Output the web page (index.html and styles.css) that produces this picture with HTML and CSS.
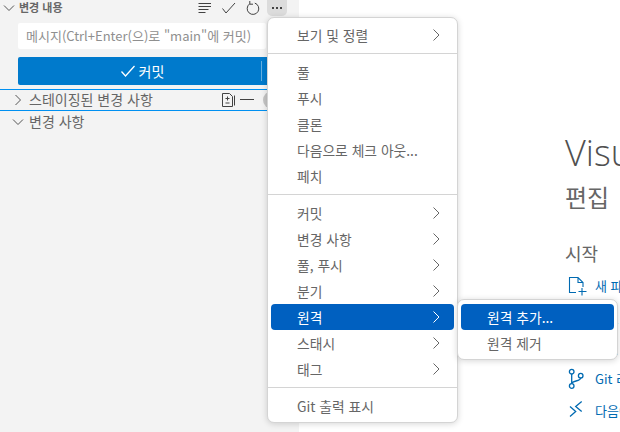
FILE: index.html
```html
<!DOCTYPE html>
<html lang="ko">
<head>
<meta charset="utf-8">
<title>변경 내용</title>
<link rel="stylesheet" href="styles.css">
</head>
<body>
<div class="app">
  <aside class="sidebar">
    <div class="view-head">
      <svg class="chev" viewBox="0 0 16 16"><path d="M3 5.500l5 5 5-5"/></svg>
      <span class="view-title">변경 내용</span>
      <div class="actions">
        <svg class="act" viewBox="0 0 16 16"><path d="M1.500 3.500h12.500M1.500 6.500h12.500M1.500 9.500h10M1.500 12.500h7"/></svg>
        <svg class="act" viewBox="0 0 16 16"><path d="M1.500 8.500l3.500 4.500L14 3"/></svg>
        <svg class="act" viewBox="0 0 16 16"><path d="M4.600 3.900A5.800 5.800 0 1 0 9.800 3.100M4.800 1v3.200H8"/></svg>
        <span class="more"><i></i><i></i><i></i></span>
      </div>
    </div>
    <div class="input">메시지(Ctrl+Enter(으)로 "main"에 커밋)</div>
    <div class="commit">
      <svg class="commit-check" viewBox="0 0 16 16"><path d="M1.500 8.500l4 4.500L14.500 3"/></svg>
      <span>커밋</span>
      <b class="commit-split"></b>
    </div>
    <div class="section focused">
      <svg class="chev" viewBox="0 0 16 16"><path d="M5.500 3l5 5-5 5"/></svg>
      <span class="section-title">스테이징된 변경 사항</span>
      <div class="section-actions">
        <svg class="act" viewBox="0 0 16 16"><path d="M1.500 1.500h7l3 3v10h-10zM13.500 3.500v10M6.500 4.500v4M4.500 6.500h4M4.500 11h4"/></svg>
        <svg class="act" viewBox="0 0 16 16"><path d="M1 7.500h14"/></svg>
        <span class="badge"></span>
      </div>
    </div>
    <div class="section">
      <svg class="chev" viewBox="0 0 16 16"><path d="M3 5.500l5 5 5-5"/></svg>
      <span class="section-title">변경 사항</span>
    </div>
  </aside>
  <main class="welcome">
    <h1>Visual Studio Code</h1>
    <h2>편집 기능 향상됨</h2>
    <h3>시작</h3>
    <ul class="links">
      <li class="link"><svg viewBox="0 0 20 20"><path d="M9 17.500H2.500v-15h8.500l5 5v4.500M11 2.500v5h5M15 13v7.500M11.500 16.500h8"/></svg>새 파일...</li>
      <li class="link"><svg viewBox="0 0 20 20"><path d="M3 3h14v14H3z"/></svg>파일 열기...</li>
      <li class="link"><svg viewBox="0 0 20 20"><path d="M2 4h6l2 2h8v10H2z"/></svg>폴더 열기...</li>
      <li class="link"><svg class="bold" viewBox="0 0 20 20"><circle cx="4.700" cy="2.700" r="2.300"/><circle cx="4.700" cy="17" r="2.300"/><circle cx="13.700" cy="6.700" r="2.300"/><path d="M4.700 5v9.700M13.700 9c0 3.500-9 2.500-9 5.700"/></svg>Git 리포지토리 복제...</li>
      <li class="link"><svg class="bold" viewBox="0 0 20 20"><path d="M3 6.500l5.700 5-5.700 5M14.700 1.500l-6 5 6 5"/></svg>다음에 연결...</li>
    </ul>
  </main>
</div>

<div class="menu main-menu">
  <div class="item sub">보기 및 정렬<svg class="arrow" viewBox="0 0 16 16"><path d="M5.500 2.500L11 8l-5.500 5.500"/></svg></div>
  <div class="sep"></div>
  <div class="item">풀</div>
  <div class="item">푸시</div>
  <div class="item">클론</div>
  <div class="item">다음으로 체크 아웃...</div>
  <div class="item">페치</div>
  <div class="sep"></div>
  <div class="item sub">커밋<svg class="arrow" viewBox="0 0 16 16"><path d="M5.500 2.500L11 8l-5.500 5.500"/></svg></div>
  <div class="item sub">변경 사항<svg class="arrow" viewBox="0 0 16 16"><path d="M5.500 2.500L11 8l-5.500 5.500"/></svg></div>
  <div class="item sub">풀, 푸시<svg class="arrow" viewBox="0 0 16 16"><path d="M5.500 2.500L11 8l-5.500 5.500"/></svg></div>
  <div class="item sub">분기<svg class="arrow" viewBox="0 0 16 16"><path d="M5.500 2.500L11 8l-5.500 5.500"/></svg></div>
  <div class="item sub active">원격<svg class="arrow" viewBox="0 0 16 16"><path d="M5.500 2.500L11 8l-5.500 5.500"/></svg></div>
  <div class="item sub">스태시<svg class="arrow" viewBox="0 0 16 16"><path d="M5.500 2.500L11 8l-5.500 5.500"/></svg></div>
  <div class="item sub">태그<svg class="arrow" viewBox="0 0 16 16"><path d="M5.500 2.500L11 8l-5.500 5.500"/></svg></div>
  <div class="sep"></div>
  <div class="item">Git 출력 표시</div>
</div>

<div class="menu sub-menu">
  <div class="item active">원격 추가...</div>
  <div class="item">원격 제거</div>
</div>
</body>
</html>
```
FILE: styles.css
```css
* { box-sizing: border-box; }
html, body { margin: 0; height: 100%; overflow: hidden; }
body {
  background: #fff;
  color: #666;
  font-family: "Noto Sans CJK KR", "Open Sans", sans-serif;
  font-size: 13px;
}
svg { fill: none; stroke: currentColor; stroke-width: 1; overflow: visible; }
.app { display: flex; width: 620px; height: 432px; }
.sidebar { width: 299px; flex: none; background: #f3f3f3; overflow: hidden; }
.view-head { display: flex; align-items: center; height: 15px; padding-left: 1px; color: #424242; }
.chev { width: 16px; height: 16px; flex: none; color: #555; }
.view-title { margin-left: 2px; font-size: 11px; font-weight: 700; color: #666; line-height: 15px; }
.actions { margin-left: auto; display: flex; align-items: center; gap: 8px; margin-right: 12px; }
.act { width: 16px; height: 16px; flex: none; color: #424242; }
.more { width: 20px; height: 17px; margin-left: -2px; background: #dcdcdc; border-radius: 0 0 5px 5px; display: flex; align-items: center; justify-content: center; gap: 2px; }
.more i { width: 2px; height: 2px; background: #424242; }
.input {
  margin: 8px 0 0 18px; width: 248px; height: 26px; background: #fff; padding: 0 0 1px 8px;
  font-size: 13px; line-height: 25px; color: #8f8f8f; white-space: nowrap; overflow: hidden; border-radius: 2px;
}
.commit {
  margin: 8px 0 0 18px; width: 257px; height: 28px; padding: 0 9px 1px 0; background: #007acc; color: #fff; border-radius: 2px;
  display: flex; align-items: center; justify-content: center; font-size: 14px; position: relative; gap: 3px;
}
.commit-check { width: 16px; height: 16px; stroke-width: 1.300; }
.commit-split { position: absolute; right: 13px; top: 4px; width: 1px; height: 20px; background: #66afe0; }
.section { display: flex; align-items: center; height: 22px; padding: 0 0 2px 10px; color: #666; line-height: 20px; }
.section.focused { margin-top: 4px; height: 22px; border-top: 1px solid #0090f1; border-bottom: 1px solid #0090f1; }
.section .chev { margin-bottom: -2px; }
.section-title { margin-left: 3px; font-size: 14px; white-space: nowrap; }
.section-actions { margin: 0 0 -2px auto; display: flex; align-items: center; gap: 2px; }
.badge { width: 18px; height: 18px; border-radius: 50%; background: #c4c4c4; margin-left: 6px; margin-right: 18px; }

.welcome { flex: 1; min-width: 0; overflow: hidden; padding: 128px 0 0 267px; white-space: nowrap; }
.welcome h1 { margin: 0 0 0 -1px; font-family: "Open Sans", sans-serif; font-size: 36px; font-weight: 300; line-height: 50px; color: #505050; }
.welcome h2 { margin: 3px 0 0 -1px; font-size: 24px; font-weight: 400; line-height: 32px; color: #666; word-spacing: 4px; }
.welcome h3 { margin: 27px 0 0 -1px; font-size: 18px; font-weight: 400; line-height: 26px; color: #666; }
.links { list-style: none; margin: 3px 0 0; padding: 0 0 0 1px; }
.link { display: flex; align-items: center; gap: 8px; height: 31.250px; padding-top: 1px; font-size: 13px; color: #006ab1; }
.link svg { width: 20px; height: 20px; flex: none; stroke-width: 1.100; }
.link svg.bold { stroke-width: 1.300; }

.menu {
  position: absolute; background: #fff; border: 1px solid #d4d4d4; border-radius: 7px;
  box-shadow: 0 1px 6px rgba(0,0,0,.16); padding: 4px 3px; color: #666; font-size: 13.800px;
}
.main-menu { left: 267px; top: 17px; width: 190.500px; height: 406px; }
.sub-menu { left: 457px; top: 299px; width: 160.500px; height: 61px; }
.item { display: flex; align-items: center; justify-content: space-between; height: 26px; padding: 0 11px 1px 26px; border-radius: 4px; white-space: nowrap; }
.item.active { background: #0060c0; color: #fff; }
.arrow { width: 16px; height: 16px; flex: none; margin: 0 -1px -1px 0; }
.sep { height: 1px; background: #d4d4d4; margin: 5px -3px; }
```
